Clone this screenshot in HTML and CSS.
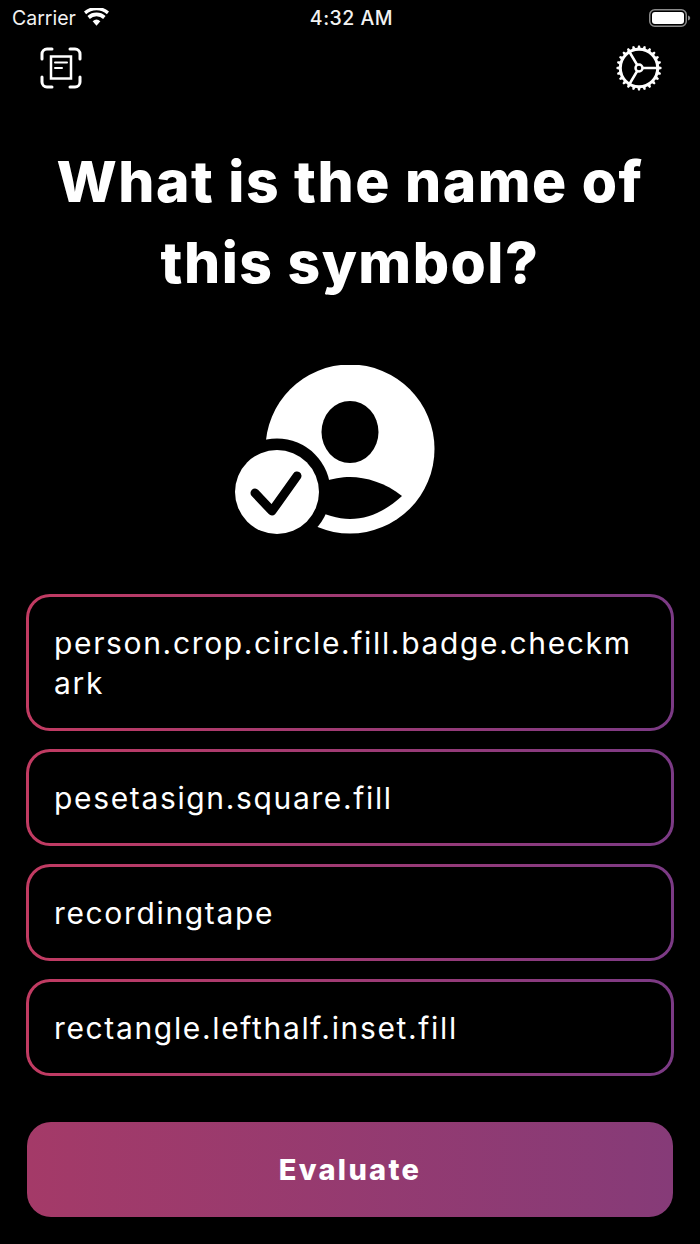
FILE: index.html
```html
<!DOCTYPE html>
<html lang="en">
<head>
<meta charset="utf-8">
<title>Symbol quiz</title>
<link rel="stylesheet" href="styles.css">
</head>
<body>
<main class="screen">
  <div class="status">
    <div class="status-left">
      <span>Carrier</span>
      <svg class="wifi" viewBox="0 0 24 17" aria-hidden="true">
        <path d="M12 17l-3.700-4.400a5.600 5.600 0 0 1 7.400 0z"/>
        <path d="M5.600 10.300l-2.300-2.700a13 13 0 0 1 17.400 0l-2.300 2.700a9.400 9.400 0 0 0-12.800 0z"/>
        <path d="M2 5.800L0 3.300a18.300 18.300 0 0 1 24 0l-2 2.500a15.200 15.200 0 0 0-20 0z"/>
      </svg>
    </div>
    <span class="time">4:32 AM</span>
    <div class="status-right">
      <svg class="battery" viewBox="0 0 42 18" aria-hidden="true">
        <rect class="batt-case" x="0.75" y="0.75" width="36.5" height="16.5" rx="5"/>
        <rect class="batt-fill" x="3" y="3" width="32" height="12" rx="3"/>
        <path class="batt-nub" d="M39 6.5c1.5.4 2.2 1.4 2.2 2.5s-.7 2.1-2.2 2.5z"/>
      </svg>
    </div>
  </div>
  <header class="toolbar">
    <svg class="scan" viewBox="0 0 42 42" aria-hidden="true">
      <path d="M2 12V7a5 5 0 0 1 5-5h5M30 2h5a5 5 0 0 1 5 5v5M40 30v5a5 5 0 0 1-5 5h-5M12 40H7a5 5 0 0 1-5-5v-5"/>
      <rect x="11" y="9.500" width="20" height="22"/>
      <path class="scan-lines" d="M15 15.500h12M15 21h7"/>
    </svg>
    <svg class="gear" viewBox="0 0 48 48" aria-hidden="true">
      <defs>
        <path id="tooth" d="M22 5.500L23.100 1.500H24.900L26 5.500Z"/>
      </defs>
      <g class="gear-tooth-set">
        <use href="#tooth"/>
        <use href="#tooth" transform="rotate(15 24 24)"/>
        <use href="#tooth" transform="rotate(30 24 24)"/>
        <use href="#tooth" transform="rotate(45 24 24)"/>
        <use href="#tooth" transform="rotate(60 24 24)"/>
        <use href="#tooth" transform="rotate(75 24 24)"/>
        <use href="#tooth" transform="rotate(90 24 24)"/>
        <use href="#tooth" transform="rotate(105 24 24)"/>
        <use href="#tooth" transform="rotate(120 24 24)"/>
        <use href="#tooth" transform="rotate(135 24 24)"/>
        <use href="#tooth" transform="rotate(150 24 24)"/>
        <use href="#tooth" transform="rotate(165 24 24)"/>
        <use href="#tooth" transform="rotate(180 24 24)"/>
        <use href="#tooth" transform="rotate(195 24 24)"/>
        <use href="#tooth" transform="rotate(210 24 24)"/>
        <use href="#tooth" transform="rotate(225 24 24)"/>
        <use href="#tooth" transform="rotate(240 24 24)"/>
        <use href="#tooth" transform="rotate(255 24 24)"/>
        <use href="#tooth" transform="rotate(270 24 24)"/>
        <use href="#tooth" transform="rotate(285 24 24)"/>
        <use href="#tooth" transform="rotate(300 24 24)"/>
        <use href="#tooth" transform="rotate(315 24 24)"/>
        <use href="#tooth" transform="rotate(330 24 24)"/>
        <use href="#tooth" transform="rotate(345 24 24)"/>
      </g>
      <circle class="gear-ring" cx="24" cy="24" r="18.700"/>
      <circle class="gear-hub" cx="24" cy="24" r="3.500"/>
      <path class="gear-spokes" d="M27.500 24H42.500M22.200 21L14.500 8M22.200 27L14.500 40"/>
    </svg>
  </header>
  <h1 class="title">What is the name of this symbol?</h1>
  <div class="symbol-wrap">
    <svg class="symbol" viewBox="234 365 232 170" role="img" aria-label="person.crop.circle.fill.badge.checkmark">
      <circle class="sym-white" cx="350" cy="449" r="84.500"/>
      <ellipse class="sym-black" cx="350" cy="432" rx="28.500" ry="31"/>
      <path class="sym-black" d="M402 496C386 483 366 477 350 477S310 484 298 496C310 510 332 519 350 519S386 511 402 496Z"/>
      <circle class="sym-black" cx="277" cy="492" r="53.500"/>
      <circle class="sym-white" cx="277" cy="492" r="42"/>
      <path class="sym-check" d="M255 493L272 511L297 476"/>
    </svg>
  </div>
  <div class="options">
    <div class="option">person.crop.circle.fill.badge.checkmark</div>
    <div class="option">pesetasign.square.fill</div>
    <div class="option">recordingtape</div>
    <div class="option">rectangle.lefthalf.inset.fill</div>
  </div>
  <button class="evaluate" type="button">Evaluate</button>
</main>
</body>
</html>
```
FILE: styles.css
```css
* { box-sizing: border-box; }
html, body { margin: 0; padding: 0; background: #000; }
.screen {
  width: 700px;
  height: 1244px;
  overflow: hidden;
  display: flex;
  flex-direction: column;
  background: #000;
  color: #fff;
  font-family: "Inter", "Liberation Sans", sans-serif;
}
.status {
  height: 36px;
  padding: 0 9px 0 12px;
  display: grid;
  grid-template-columns: 1fr auto 1fr;
  align-items: center;
  font-size: 19.500px;
  color: #f2f2f2;
}
.status-left { display: flex; align-items: center; gap: 8px; }
.status-right { display: flex; justify-content: flex-end; }
.time { font-weight: 500; letter-spacing: 0.5px; }
.wifi { width: 25px; height: 18px; fill: #fff; margin-bottom: 2px; }
.battery { width: 42px; height: 18px; }
.batt-case { fill: none; stroke: #8a8a8a; stroke-width: 1.5; }
.batt-fill { fill: #fff; }
.batt-nub { fill: #8a8a8a; }
.toolbar {
  height: 64px;
  padding: 8px 37px 0 40px;
  display: flex;
  justify-content: space-between;
  align-items: flex-start;
}
.scan { width: 42px; height: 42px; margin-top: 3px; fill: none; stroke: #fff; stroke-width: 3; stroke-linecap: round; }
.scan rect { stroke-width: 2.5; }
.scan-lines { stroke-width: 2; }
.gear { width: 48px; height: 48px; fill: none; stroke: #fff; }
.gear-tooth-set { fill: #fff; stroke: none; }
.gear-ring { stroke-width: 3; }
.gear-hub { stroke-width: 2.5; }
.gear-spokes { stroke-width: 2.5; }
.title {
  margin: 41px 40px 0;
  font-size: 57px;
  line-height: 81px;
  font-weight: 800;
  letter-spacing: 1.5px;
  text-align: center;
}
.symbol-wrap { margin-top: 62px; display: flex; justify-content: center; }
.symbol { width: 232px; height: 170px; display: block; }
.sym-white { fill: #fff; }
.sym-black { fill: #000; }
.sym-check { fill: none; stroke: #000; stroke-width: 9; stroke-linecap: round; stroke-linejoin: round; }
.options {
  margin: 59px 26px 0;
  display: flex;
  flex-direction: column;
  gap: 18px;
}
.option {
  min-height: 97px;
  padding: 26px 30px 25px 25px;
  border: 3px solid transparent;
  border-radius: 24px;
  background:
    linear-gradient(#000, #000) padding-box,
    linear-gradient(90deg, #c23b62, #7b3a85) border-box;
  font-size: 30px;
  line-height: 40px;
  letter-spacing: 1.65px;
  font-weight: 400;
  color: #fff;
  overflow-wrap: anywhere;
}
.evaluate {
  margin: 46px 27px 0;
  height: 95px;
  border: 0;
  border-radius: 24px;
  background: linear-gradient(90deg, #a43a68, #863b78);
  color: #fff;
  font-family: inherit;
  font-size: 29px;
  font-weight: 800;
  letter-spacing: 2.3px;
}
```
